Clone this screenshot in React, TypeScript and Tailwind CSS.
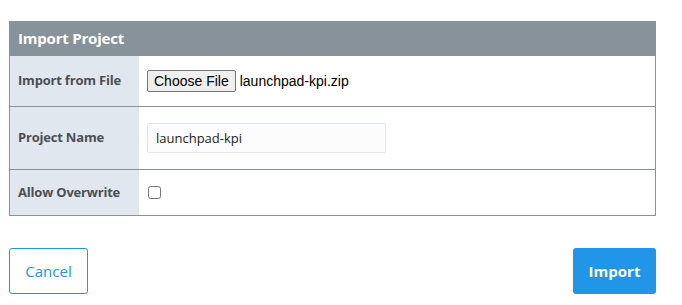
const font = { fontFamily: '"Open Sans", "Noto Sans", sans-serif' }
const native = { fontFamily: '"Liberation Sans", Arial, sans-serif' }

function LabelCell({ children, h }: { children: React.ReactNode; h: string }) {
  return (
    <div className={`${h} w-[129px] shrink-0 bg-[#e1e7ee] flex items-center pl-[8px] text-[13px] font-bold tracking-[-0.2px] text-[#4b4f54]`}>
      {children}
    </div>
  )
}

export default function App() {
  return (
    <div className="w-[682px] h-[305px] bg-white pt-[21px] pl-[9px]" style={font}>
      <div className="w-[647px] border border-t-0 border-[#87929b]">
        <div className="h-[35px] bg-[#87929b] flex items-center pl-[8px] text-[15px] font-bold tracking-[-0.2px] text-white">
          Import Project
        </div>
        <div className="flex border-b border-[#87929b]">
          <LabelCell h="h-[50px]">Import from File</LabelCell>
          <div className="flex items-center pl-[8px]">
            <button
              type="button"
              className="h-[22px] px-[6px] bg-[#efefef] border border-[#767676] rounded-[2px] text-[14px] text-black leading-none"
              style={native}
            >
              Choose File
            </button>
            <span className="ml-[4px] text-[14px] text-black" style={native}>
              launchpad-kpi.zip
            </span>
          </div>
        </div>
        <div className="flex border-b border-[#87929b]">
          <LabelCell h="h-[62px]">Project Name</LabelCell>
          <div className="flex items-center pl-[8px]">
            <input
              type="text"
              defaultValue="launchpad-kpi"
              className="w-[239px] h-[30px] px-[8px] bg-[#fcfcfc] border border-[#e3e7eb] rounded-[2px] text-[13px] text-[#222] outline-none"
              style={font}
            />
          </div>
        </div>
        <div className="flex">
          <LabelCell h="h-[45px]">Allow Overwrite</LabelCell>
          <div className="flex items-center pl-[9px]">
            <input type="checkbox" className="w-[13px] h-[13px] m-0" />
          </div>
        </div>
      </div>
      <div className="w-[647px] mt-[32px] flex justify-between">
        <button
          type="button"
          className="w-[79px] h-[46px] border border-[#2196e8] rounded-[3px] bg-white text-[15px] text-[#2196e8]"
        >
          Cancel
        </button>
        <button
          type="button"
          className="w-[83px] h-[46px] rounded-[3px] bg-[#2196e8] text-[15px] font-bold text-white"
        >
          Import
        </button>
      </div>
    </div>
  )
}
